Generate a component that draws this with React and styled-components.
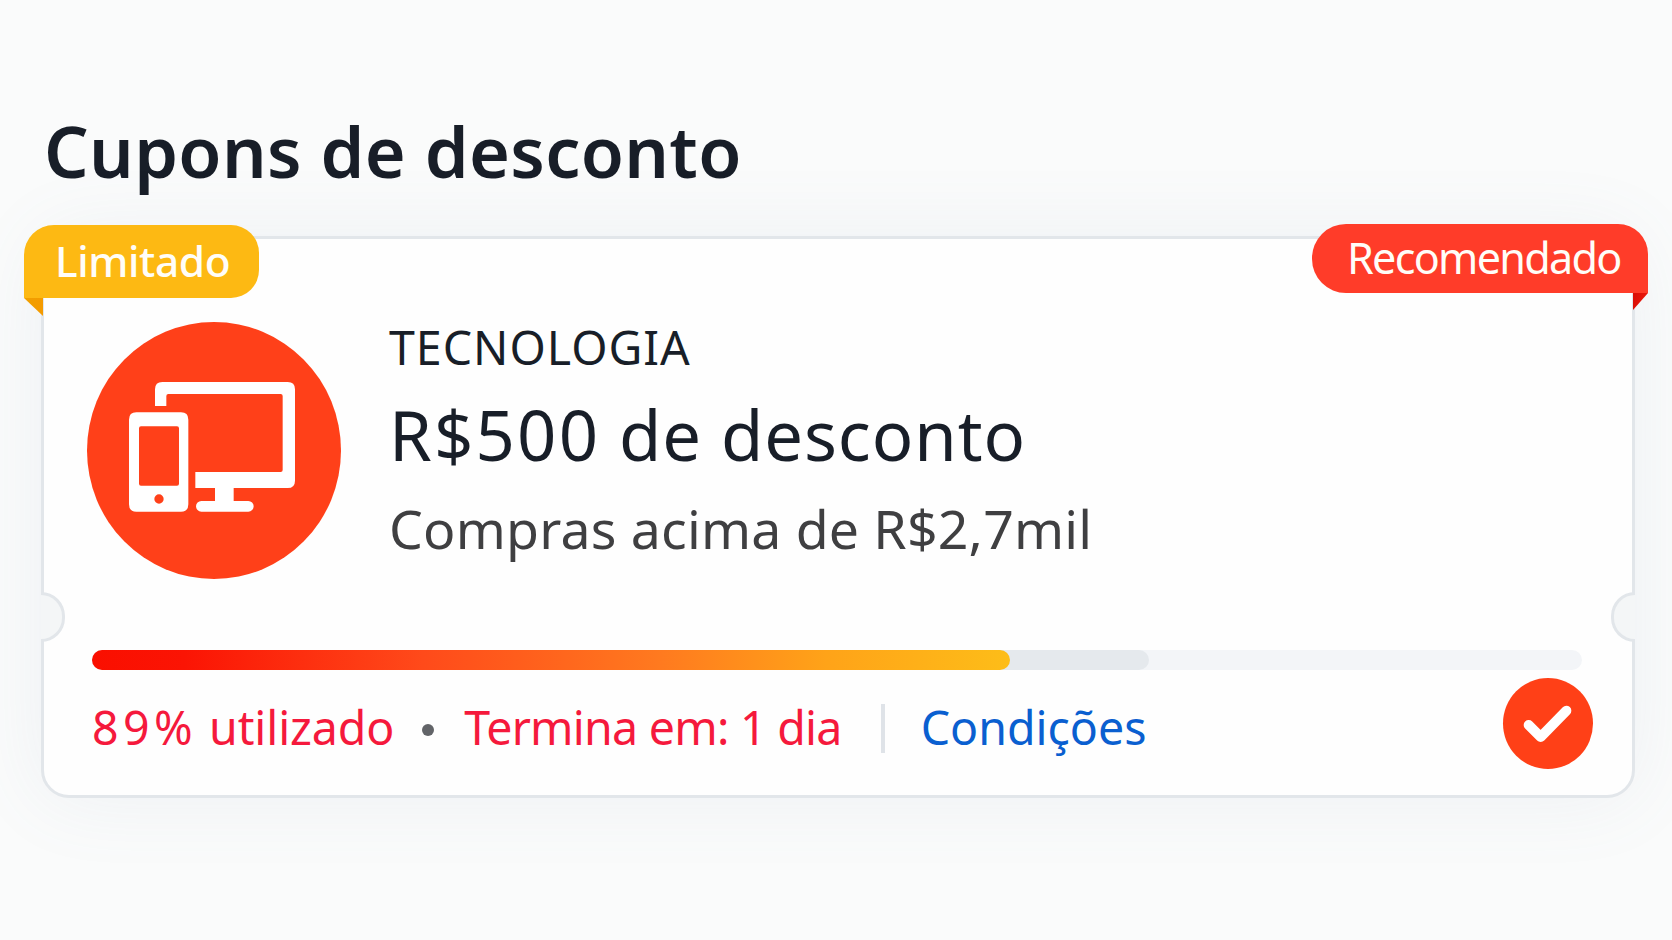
import React from "react";
import styled, { createGlobalStyle, css } from "styled-components";

const GlobalStyle = createGlobalStyle`
  * { box-sizing: border-box; }
  body {
    margin: 0;
    background: #fafbfb;
    font-family: "Noto Sans", "Open Sans", sans-serif;
    color: #181e28;
  }
`;

const Page = styled.main`
  height: 940px;
  width: 1672px;
  padding: 108px 37px 0 41px;
  overflow: hidden;
`;

const Title = styled.h1`
  margin: 0 0 42px;
  padding-left: 3px;
  font-size: 70.1px;
  line-height: 86px;
  font-weight: 600;
  letter-spacing: 0.35px;
  white-space: nowrap;
`;

const Card = styled.section`
  position: relative;
  height: 562px;
  padding: 77px 39px 0 43px;
  border: 3px solid #e2e6ea;
  border-radius: 28px;
  background: #fefefe;
  box-shadow: 0 0 80px rgba(110, 135, 165, 0.09);
`;

const Ribbon = styled.div`
  position: absolute;
  font-weight: ${(p) => p.$weight};
  letter-spacing: ${(p) => p.$spacing};
  color: #fffdf8;
  white-space: nowrap;

  &::after {
    content: "";
    position: absolute;
    top: 100%;
  }

  ${(p) =>
    p.$side === "left"
      ? css`
          top: -14px;
          left: -20px;
          width: 235px;
          height: 73px;
          padding-left: 31px;
          font-size: 42.4px;
          line-height: 71px;
          border-radius: 30px 28px 28px 0;
          background: #fdb913;
          &::after {
            left: 0;
            width: 19px;
            height: 18px;
            background: linear-gradient(100deg, #f0a000, #f59a00);
            clip-path: polygon(0 0, 100% 0, 100% 100%);
          }
        `
      : css`
          top: -15px;
          right: -16px;
          width: 336px;
          height: 69px;
          padding-left: 35px;
          font-size: 43.1px;
          line-height: 68px;
          border-radius: 34px 30px 0 34px;
          background: #ff3c29;
          &::after {
            right: 0;
            width: 15px;
            height: 17px;
            background: linear-gradient(100deg, #d90d06, #ee1c0c);
            clip-path: polygon(0 0, 100% 0, 0 100%);
          }
        `}
`;

const Notch = styled.span`
  position: absolute;
  top: 353px;
  width: 24px;
  height: 50px;
  border: 3px solid #e2e6ea;
  background: #f4f6f7;
  ${(p) =>
    p.$side === "left"
      ? css`
          left: -3px;
          border-left: 0;
          border-radius: 0 25px 25px 0;
        `
      : css`
          right: -3px;
          border-right: 0;
          border-radius: 25px 0 0 25px;
        `}
`;

const Offer = styled.div`
  display: flex;
  gap: 48px;
`;

const CategoryBadge = styled.div`
  display: flex;
  align-items: center;
  justify-content: center;
  flex: none;
  width: 254px;
  height: 257px;
  margin-top: 6px;
  padding: 0 4px 7px 0;
  border-radius: 50%;
  background: #ff4019;
`;

const OfferText = styled.div`
  display: flex;
  flex-direction: column;
  padding-top: 1px;
  white-space: nowrap;
`;

const Category = styled.span`
  font-size: 46.5px;
  line-height: 60px;
  letter-spacing: 1px;
`;

const Discount = styled.span`
  margin: 12px 0 16px;
  font-size: 68.8px;
  line-height: 90px;
  letter-spacing: 0.95px;
`;

const Figure = styled.span`
  letter-spacing: ${(p) => p.$spacing};
`;

const Minimum = styled.span`
  font-size: 53.6px;
  line-height: 68px;
  letter-spacing: 0.2px;
  color: #3f3f41;
`;

const Track = styled.div`
  display: grid;
  width: 1490px;
  height: 20px;
  margin: 71px 0 8px 5px;
  border-radius: 10px;
  background: #f3f5f8;
`;

const Segment = styled.div`
  grid-area: 1 / 1;
  width: ${(p) => p.$width};
  border-radius: 10px;
  background: ${(p) => p.$fill};
`;

const Footer = styled.div`
  display: flex;
  align-items: center;
  height: 91px;
  padding-left: 5px;
  font-size: 46.5px;
  line-height: 60px;
  white-space: nowrap;
`;

const Status = styled.span`
  margin-top: 6px;
  letter-spacing: ${(p) => p.$spacing};
  color: #f5193c;
`;

const Dot = styled.i`
  width: 12px;
  height: 12px;
  margin: 13px 30px 0 28px;
  border-radius: 50%;
  background: #626468;
`;

const Divider = styled.i`
  width: 4px;
  height: 49px;
  margin: 10px 36px 0 39px;
  background: #dfe3e8;
`;

const Terms = styled.a`
  margin-top: 6px;
  letter-spacing: 0;
  color: #0a5fd0;
`;

const Selected = styled.span`
  display: flex;
  flex: none;
  width: 90px;
  height: 91px;
  margin-left: auto;
  border-radius: 50%;
  background: #ff4017;
`;

const DevicesIcon = () => (
  <svg width="166" height="130" viewBox="0 0 498 390" fill="#fff" fillRule="evenodd">
    <path d="M78 72V22Q78 0 100 0H476Q498 0 498 22V296Q498 318 476 318H314V357H358A16 16 0 0 1 358 389H217A16 16 0 0 1 217 357H258V318H199V270H455Q461 270 461 264V42Q461 36 455 36H118Q112 36 112 42V72Z" />
    <path d="M22 91H156Q178 91 178 113V367Q178 389 156 389H22Q0 389 0 367V113Q0 91 22 91ZM36 133Q30 133 30 139V305Q30 311 36 311H144Q150 311 150 305V139Q150 133 144 133ZM90 337A14 14 0 1 0 90 365A14 14 0 1 0 90 337Z" />
  </svg>
);

const CheckIcon = () => (
  <svg width="90" height="91" viewBox="0 0 268 273" fill="none">
    <path d="M76 141L112 177L189 98" stroke="#fff" strokeWidth="30" strokeLinecap="round" strokeLinejoin="round" />
  </svg>
);

export default function App() {
  return (
    <>
      <GlobalStyle />
      <Page>
        <Title>Cupons de desconto</Title>
        <Card>
          <Ribbon $side="left" $weight={500} $spacing="-0.4px">Limitado</Ribbon>
          <Ribbon $side="right" $weight={400} $spacing="-1.7px">Recomendado</Ribbon>
          <Notch $side="left" />
          <Notch $side="right" />
          <Offer>
            <CategoryBadge>
              <DevicesIcon />
            </CategoryBadge>
            <OfferText>
              <Category>TECNOLOGIA</Category>
              <Discount>
                <Figure $spacing="2.2px">R$500</Figure> de desconto
              </Discount>
              <Minimum>Compras acima de R$2,7mil</Minimum>
            </OfferText>
          </Offer>
          <Track>
            <Segment $width="1057px" $fill="#e5e9ed" />
            <Segment
              $width="918px"
              $fill="linear-gradient(90deg, #fa0f00 0%, #fb1404 10%, #ff4a1a 36%, #ff7a1f 62%, #ffa318 80%, #fdbd18 100%)"
            />
          </Track>
          <Footer>
            <Status $spacing="-0.1px">
              <Figure $spacing="4.4px">89%</Figure> utilizado
            </Status>
            <Dot />
            <Status $spacing="-0.75px">Termina em: 1 dia</Status>
            <Divider />
            <Terms>Condições</Terms>
            <Selected>
              <CheckIcon />
            </Selected>
          </Footer>
        </Card>
      </Page>
    </>
  );
}
